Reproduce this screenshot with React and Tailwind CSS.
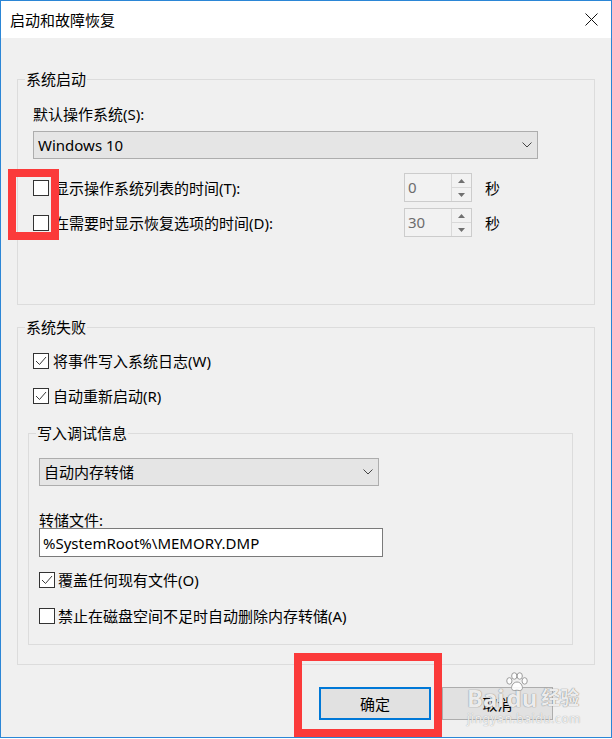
import { useState } from 'react';

const CheckBox = ({ checked }) => (
    <span className="relative w-[16px] h-[16px] shrink-0 border border-[#333333] bg-white">
        {checked && (
            <svg className="absolute left-0 top-0" width="14" height="14" viewBox="0 0 14 14">
                <polyline points="2,7 5.5,10.5 12,3" fill="none" stroke="#3a3a3a" strokeWidth="1" />
            </svg>
        )}
    </span>
)

const Chevron = () => (
    <svg width="10" height="6" viewBox="0 0 10 6">
        <polyline points="0.5,0.5 5,5 9.5,0.5" fill="none" stroke="#444" strokeWidth="1" />
    </svg>
)

const Combo = ({ text, className }) => (
    <div className={`h-[28px] border border-[#adadad] bg-[#e5e5e5] flex items-center pl-[4px] pr-[5px] ${className}`}>
        <span className="flex-1 leading-[20px]">{text}</span>
        <Chevron />
    </div>
)

const Spin = ({ value }) => (
    <div className="w-[68px] h-[29px] border border-[#cccccc] bg-[#f2f2f2] flex">
        <span className="flex-1 pl-[3px] leading-[27px] text-[#6d6d6d]">{value}</span>
        <div className="w-[20px] flex flex-col border-l border-[#d9d9d9]">
            <div className="flex-1 flex items-center justify-center border-b border-[#d9d9d9]">
                <svg width="7" height="4" viewBox="0 0 7 4"><polygon points="0,4 3.5,0 7,4" fill="#707070" /></svg>
            </div>
            <div className="flex-1 flex items-center justify-center">
                <svg width="7" height="4" viewBox="0 0 7 4"><polygon points="0,0 3.5,4 7,0" fill="#707070" /></svg>
            </div>
        </div>
    </div>
)

const Group = ({ title, className, children }) => (
    <div className={`border border-[#dcdcdc] flex flex-col ${className}`}>
        <span className="-mt-[11px] ml-[7px] self-start px-[1px] bg-[#f0f0f0] leading-[20px]">{title}</span>
        {children}
    </div>
)

const App = () => {
    const [writeLog, setWriteLog] = useState(true);
    const [restart, setRestart] = useState(true);
    const [overwrite, setOverwrite] = useState(true);
    const [noDelete, setNoDelete] = useState(false);

    return (
        <div className="relative w-[612px] h-[739px] bg-white text-[15px] text-black font-['Noto_Sans','Noto_Sans_CJK_SC',sans-serif]">
            <div className="w-[612px] h-[738px] border border-[#2b86d6] bg-[#f0f0f0] flex flex-col">
                {/* title bar */}
                <div className="h-[37px] shrink-0 bg-white flex items-center pl-[9px] pr-[13px]">
                    <span className="flex-1 leading-[20px]">启动和故障恢复</span>
                    <svg width="13" height="13" viewBox="0 0 13 13">
                        <line x1="0.5" y1="0.5" x2="12.5" y2="12.5" stroke="#111" strokeWidth="1" />
                        <line x1="12.5" y1="0.5" x2="0.5" y2="12.5" stroke="#111" strokeWidth="1" />
                    </svg>
                </div>

                <div className="flex flex-col pl-[16px]">
                    <Group title="系统启动" className="mt-[41px] w-[578px] h-[226px]">
                        <span className="mt-[15px] ml-[15px] self-start leading-[20px]">默认操作系统(S):</span>
                        <Combo text="Windows 10" className="mt-[7px] ml-[15px] w-[505px]" />
                        <div className="mt-[14px] ml-[15px] h-[29px] flex items-center">
                            <CheckBox />
                            <span className="ml-[5px] w-[350px] leading-[20px]">显示操作系统列表的时间(T):</span>
                            <Spin value="0" />
                            <span className="ml-[13px] leading-[20px]">秒</span>
                        </div>
                        <div className="mt-[6px] ml-[15px] h-[29px] flex items-center">
                            <CheckBox />
                            <span className="ml-[5px] w-[350px] leading-[20px]">在需要时显示恢复选项的时间(D):</span>
                            <Spin value="30" />
                            <span className="ml-[13px] leading-[20px]">秒</span>
                        </div>
                    </Group>

                    <Group title="系统失败" className="mt-[22px] w-[578px] h-[338px]">
                        <label className="mt-[14px] ml-[15px] h-[20px] flex items-center gap-[4px] self-start" onClick={() => setWriteLog(!writeLog)}>
                            <CheckBox checked={writeLog} />
                            <span className="leading-[20px]">将事件写入系统日志(W)</span>
                        </label>
                        <label className="mt-[15px] ml-[15px] h-[20px] flex items-center gap-[4px] self-start" onClick={() => setRestart(!restart)}>
                            <CheckBox checked={restart} />
                            <span className="leading-[20px]">自动重新启动(R)</span>
                        </label>

                        <Group title="写入调试信息" className="mt-[27px] ml-[10px] w-[545px] h-[212px]">
                            <Combo text="自动内存转储" className="mt-[15px] ml-[10px] w-[340px]" />
                            <span className="mt-[26px] ml-[10px] self-start leading-[16px]">转储文件:</span>
                            <div className="ml-[10px] w-[344px] h-[29px] bg-white border border-[#7a7a7a] flex items-center pl-[3px]">
                                <span className="leading-[20px]">%SystemRoot%\MEMORY.DMP</span>
                            </div>
                            <label className="mt-[13px] ml-[10px] h-[20px] flex items-center gap-[3px] self-start" onClick={() => setOverwrite(!overwrite)}>
                                <CheckBox checked={overwrite} />
                                <span className="leading-[20px]">覆盖任何现有文件(O)</span>
                            </label>
                            <label className="mt-[16px] ml-[10px] h-[20px] flex items-center gap-[3px] self-start" onClick={() => setNoDelete(!noDelete)}>
                                <CheckBox checked={noDelete} />
                                <span className="leading-[20px]">禁止在磁盘空间不足时自动删除内存转储(A)</span>
                            </label>
                        </Group>
                    </Group>

                    <div className="mt-[22px] ml-[302px] flex">
                        <button className="w-[112px] h-[33px] border-2 border-[#0078d7] bg-[#e1e1e1] leading-[20px]">确定</button>
                        <button className="ml-[11px] w-[111px] h-[33px] border border-[#adadad] bg-[#e1e1e1] leading-[20px]">取消</button>
                    </div>
                </div>
            </div>

            {/* baidu watermark */}
            <div className="absolute left-[467px] top-[672px] pointer-events-none select-none flex flex-col items-start">
                <div className="relative flex items-end font-bold text-[24px] leading-[24px] text-white/85 [text-shadow:0_0_1px_#7c7c7c,0_0_1px_#9a9a9a]">
                    <span className="mt-[14px]">Bai</span>
                    <span className="ml-[2px]">du</span>
                    <span className="ml-[4px] text-[19px]">经验</span>
                    <svg className="absolute left-[38px] top-0" width="24" height="20" viewBox="0 0 22 18">
                        <g fill="rgba(255,255,255,0.9)" stroke="#9a9a9a" strokeWidth="0.9">
                            <ellipse cx="4" cy="8" rx="2.4" ry="3" />
                            <ellipse cx="8.5" cy="3.5" rx="2.4" ry="3" />
                            <ellipse cx="13.5" cy="3.5" rx="2.4" ry="3" />
                            <ellipse cx="18" cy="8" rx="2.4" ry="3" />
                            <path d="M11 9 C7 9 5 14 6.5 16 C8 17.5 10 16.5 11 16.5 C12 16.5 14 17.5 15.5 16 C17 14 15 9 11 9 Z" />
                        </g>
                    </svg>
                </div>
                <span className="mt-[3px] text-[12px] leading-[12px] tracking-[0.6px] text-white/85 [text-shadow:0_0_1px_#8a8a8a]">jingyan.baidu.com</span>
            </div>

            {/* red annotation frames */}
            <div className="absolute left-[8px] top-[169px] w-[51px] h-[71px] border-[8px] border-[#fb3a3a]" />
            <div className="absolute left-[294px] top-[653px] w-[148px] h-[84px] border-[8px] border-[#fb3a3a]" />
        </div>
    )
}

export default App
